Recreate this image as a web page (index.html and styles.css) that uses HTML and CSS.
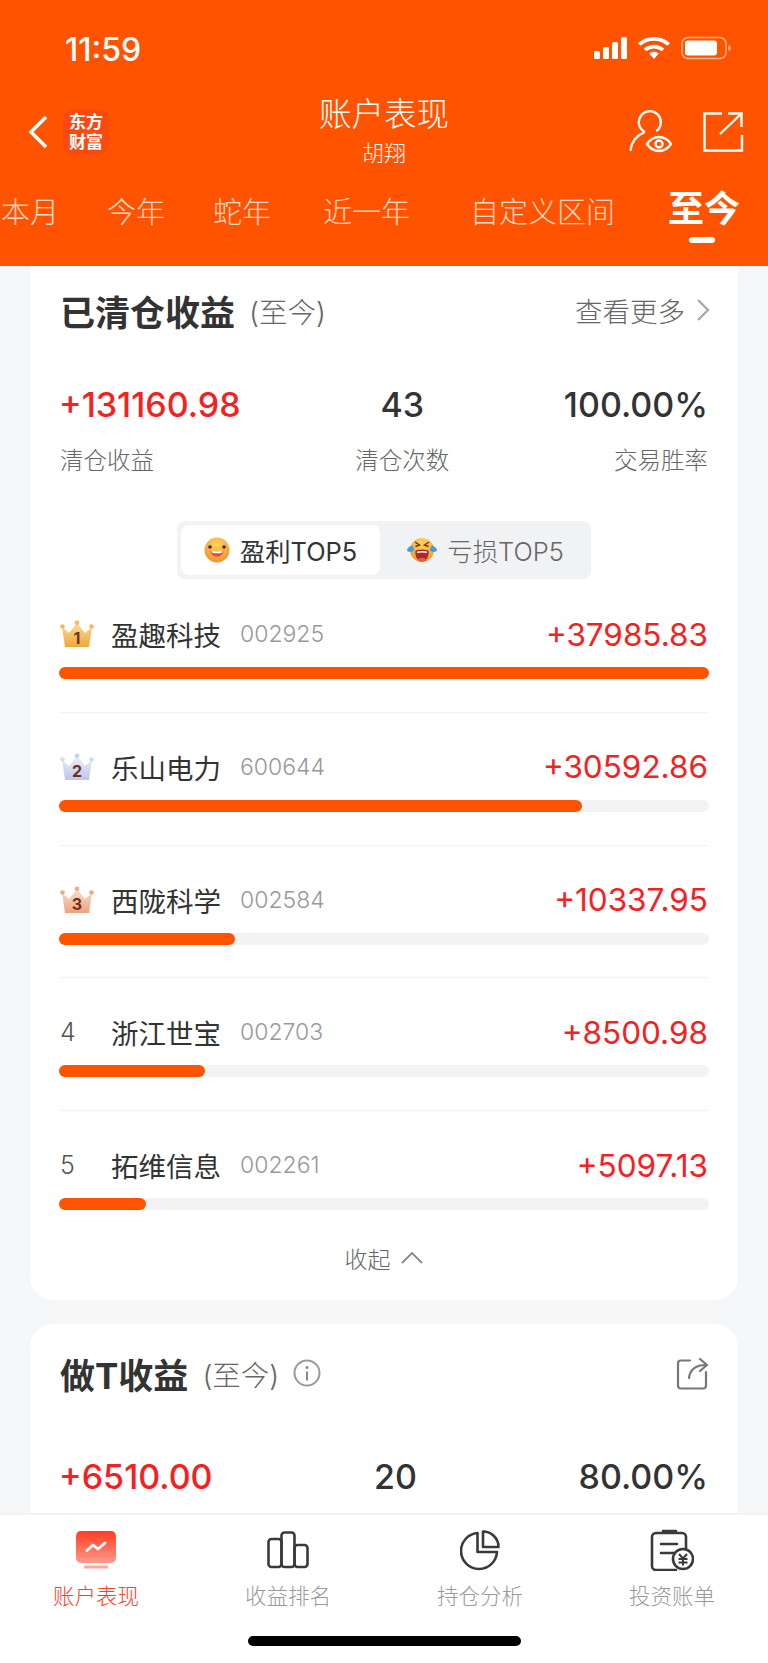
FILE: index.html
```html
<!DOCTYPE html>
<html lang="zh-CN">
<head>
  <meta charset="UTF-8" />
  <title>账户表现</title>
  <link rel="stylesheet" href="styles.css">
</head>
<body>
<div class="page">

  <header class="top">
    <div class="status">
      <span class="time">11:59</span>
      <div class="status-icons">
        <svg width="34" height="24" viewBox="0 0 34 24"><g fill="#fff"><rect x="0" y="15" width="6" height="8" rx="1.5"/><rect x="9" y="11" width="6" height="12" rx="1.5"/><rect x="18" y="6" width="6" height="17" rx="1.5"/><rect x="27" y="1" width="6" height="22" rx="1.5"/></g></svg>
        <svg width="32" height="24" viewBox="0 0 32 24"><g fill="none" stroke="#fff" stroke-width="3.6"><path d="M2 8.500C10 1 22 1 30 8.500"/><path d="M7.500 14C12.500 9.500 19.500 9.500 24.500 14"/></g><path d="M11.500 17.500C14 15.300 18 15.300 20.500 17.500L16 23z" fill="#fff"/></svg>
        <svg width="50" height="24" viewBox="0 0 50 24"><rect x="1" y="1.500" width="44" height="21" rx="6" fill="none" stroke="#ffb48f" stroke-width="1.500"/><rect x="4" y="4.500" width="32" height="15" rx="3" fill="#fff"/><path d="M47.500 9v6c1.500-.5 2.300-1.700 2.300-3s-.8-2.500-2.300-3z" fill="#ffb48f"/></svg>
      </div>
    </div>

    <div class="nav">
      <div class="nav-left">
        <svg width="20" height="34" viewBox="0 0 20 34"><path d="M18 2L3 17l15 15" fill="none" stroke="#fff" stroke-width="3.600"/></svg>
        <div class="logo">东方<br>财富</div>
      </div>
      <div class="nav-title">
        <div class="title">账户表现</div>
        <div class="subtitle">胡翔</div>
      </div>
      <div class="nav-right">
        <svg width="43" height="44" viewBox="0 0 43 44"><g fill="none" stroke="#fff" stroke-width="2.400" stroke-linecap="round"><path d="M15 21.500A11 11 0 1 1 28 20.500"/><path d="M1.500 40C3 30 9 25 15 22.500"/><path d="M18 34c3-4.500 7-7 12-7s9 2.500 12 7c-3 4.500-7 7-12 7s-9-2.500-12-7z"/><circle cx="30" cy="34" r="3.500"/></g></svg>
        <svg width="42" height="42" viewBox="0 0 42 42"><g fill="none" stroke="#fff" stroke-width="2.400"><path d="M20 2.500H2.500v37H40V24"/><path d="M18 23L40 2"/><path d="M26 2.500h13.500V16"/></g></svg>
      </div>
    </div>

    <nav class="tabs">
      <span class="tab">本月</span>
      <span class="tab">今年</span>
      <span class="tab">蛇年</span>
      <span class="tab tab-gap">近一年</span>
      <span class="tab tab-wide">自定义区间</span>
      <span class="tab tab-on">至今</span>
    </nav>
  </header>

  <main class="content">
    <section class="card card-first">
      <div class="card-head">
        <h2>已清仓收益</h2>
        <span class="range">(至今)</span>
        <span class="more">查看更多
          <svg width="16" height="24" viewBox="0 0 16 24"><path d="M3 2l10 10L3 22" fill="none" stroke="#aaa" stroke-width="2.400"/></svg>
        </span>
      </div>

      <div class="stats">
        <div class="stat"><div class="val red">+131160.98</div><div class="lab">清仓收益</div></div>
        <div class="stat mid"><div class="val">43</div><div class="lab">清仓次数</div></div>
        <div class="stat end"><div class="val">100.00%</div><div class="lab">交易胜率</div></div>
      </div>

      <div class="toggle-wrap">
        <div class="toggle">
          <div class="seg seg-on">
            <svg width="26" height="26" viewBox="0 0 26 26"><defs><radialGradient id="sm" cx=".5" cy=".3" r=".75"><stop offset="0" stop-color="#ffd75e"/><stop offset="1" stop-color="#f28a2c"/></radialGradient></defs><circle cx="13" cy="13" r="12.500" fill="url(#sm)"/><circle cx="6" cy="10" r="1.800" fill="#4a2b3a"/><circle cx="20" cy="10" r="1.800" fill="#4a2b3a"/><path d="M6.500 13.500c4 1.300 9 1.300 13 0-.6 4-3.200 6-6.500 6s-5.900-2-6.500-6z" fill="#e4493a"/><path d="M7.500 13.800c3.500.9 7.500.9 11 0l-.5 2c-3 .7-7 .7-10 0z" fill="#fff"/></svg>
            盈利TOP5
          </div>
          <div class="seg seg-off">
            <svg width="30" height="26" viewBox="0 0 30 26"><defs><radialGradient id="cr" cx=".5" cy=".2" r=".8"><stop offset="0" stop-color="#ffd45c"/><stop offset="1" stop-color="#ee9a30"/></radialGradient></defs><circle cx="15" cy="13" r="12" fill="url(#cr)"/><path d="M8 5l4.500 3-4 1.500M22 5l-4.500 3 4 1.500" fill="none" stroke="#6a3a20" stroke-width="1.500"/><path d="M8.500 13.500c4-1.500 9-1.500 13 0 1 5-2 11-6.500 11s-7.500-6-6.500-11z" fill="#a92a26"/><path d="M10 14.500c3-.8 7-.8 10 0v1.500c-3-.7-7-.7-10 0z" fill="#fff"/><path d="M11 23c1-3 7-3 8 0-2 1.800-6 1.800-8 0z" fill="#f0564a"/><path d="M4.500 8.500c1.500 1 2.500 2.500 2.500 4s-1.500 2.500-3.500 2.500S0 14 0 13c0-1.500 2.500-3.500 4.500-4.500zM25.500 8.500c-1.500 1-2.500 2.500-2.500 4s1.500 2.500 3.500 2.500S30 14 30 13c0-1.500-2.500-3.500-4.500-4.500z" fill="#3c9fe4"/></svg>
            亏损TOP5
          </div>
        </div>
      </div>

      <div class="row">
        <div class="row-top">
          <span class="rank">
            <svg width="34" height="28" viewBox="0 0 34 28"><defs><linearGradient id="c1" x1="0" y1="0" x2="0" y2="1"><stop offset="0" stop-color="#fbdc9a"/><stop offset="1" stop-color="#f0a63c"/></linearGradient></defs><path d="M2 7l7 6 8-10 8 10 7-6-3 20H5z" fill="url(#c1)"/><circle cx="2.500" cy="6.500" r="2.300" fill="#f5b85a"/><circle cx="17" cy="2.700" r="2.300" fill="#f5b85a"/><circle cx="31.500" cy="6.500" r="2.300" fill="#f5b85a"/><text x="17" y="24" class="crown-num" fill="#6b3a1c">1</text></svg>
          </span>
          <span class="name">盈趣科技</span><span class="code">002925</span>
          <span class="amount red">+37985.83</span>
        </div>
        <div class="track"><div class="fill" style="width:100%"></div></div>
      </div>

      <div class="row">
        <div class="row-top">
          <span class="rank">
            <svg width="34" height="28" viewBox="0 0 34 28"><defs><linearGradient id="c2" x1="0" y1="0" x2="0" y2="1"><stop offset="0" stop-color="#eceffa"/><stop offset="1" stop-color="#bcc6ea"/></linearGradient></defs><path d="M2 7l7 6 8-10 8 10 7-6-3 20H5z" fill="url(#c2)"/><circle cx="2.500" cy="6.500" r="2.300" fill="#d3daf2"/><circle cx="17" cy="2.700" r="2.300" fill="#c8d0ee"/><circle cx="31.500" cy="6.500" r="2.300" fill="#d3daf2"/><text x="17" y="24" class="crown-num" fill="#6e2f22">2</text></svg>
          </span>
          <span class="name">乐山电力</span><span class="code">600644</span>
          <span class="amount red">+30592.86</span>
        </div>
        <div class="track"><div class="fill" style="width:80.5%"></div></div>
      </div>

      <div class="row">
        <div class="row-top">
          <span class="rank">
            <svg width="34" height="28" viewBox="0 0 34 28"><defs><linearGradient id="c3" x1="0" y1="0" x2="0" y2="1"><stop offset="0" stop-color="#fbe0d0"/><stop offset="1" stop-color="#eda27c"/></linearGradient></defs><path d="M2 7l7 6 8-10 8 10 7-6-3 20H5z" fill="url(#c3)"/><circle cx="2.500" cy="6.500" r="2.300" fill="#f0a885"/><circle cx="17" cy="2.700" r="2.300" fill="#f0a885"/><circle cx="31.500" cy="6.500" r="2.300" fill="#f0a885"/><text x="17" y="24" class="crown-num" fill="#6e2f22">3</text></svg>
          </span>
          <span class="name">西陇科学</span><span class="code">002584</span>
          <span class="amount red">+10337.95</span>
        </div>
        <div class="track"><div class="fill" style="width:27.1%"></div></div>
      </div>

      <div class="row">
        <div class="row-top">
          <span class="rank rank-num">4</span>
          <span class="name">浙江世宝</span><span class="code">002703</span>
          <span class="amount red">+8500.98</span>
        </div>
        <div class="track"><div class="fill" style="width:22.4%"></div></div>
      </div>

      <div class="row row-last">
        <div class="row-top">
          <span class="rank rank-num">5</span>
          <span class="name">拓维信息</span><span class="code">002261</span>
          <span class="amount red">+5097.13</span>
        </div>
        <div class="track"><div class="fill" style="width:13.4%"></div></div>
      </div>

      <div class="collapse">收起
        <svg width="24" height="14" viewBox="0 0 24 14"><path d="M2 12L12 2l10 10" fill="none" stroke="#888" stroke-width="1.800"/></svg>
      </div>
    </section>

    <section class="card card-second">
      <div class="card-head">
        <h2>做T收益</h2>
        <span class="range">(至今)</span>
        <svg class="info" width="28" height="28" viewBox="0 0 28 28"><circle cx="14" cy="14" r="12.500" fill="none" stroke="#999" stroke-width="2"/><circle cx="14" cy="8.500" r="1.500" fill="#888"/><path d="M14 12.500v9" stroke="#888" stroke-width="2"/></svg>
        <svg class="share" width="32" height="33" viewBox="0 0 32 33"><g fill="none" stroke="#777" stroke-width="2.200" stroke-linecap="round" stroke-linejoin="round"><path d="M14 3.500H5a3 3 0 0 0-3 3v22a3 3 0 0 0 3 3h22a3 3 0 0 0 3-3V15"/><path d="M13 21c1-8 6-13 17-13"/><path d="M24 2l7 6-7 6"/></g></svg>
      </div>
      <div class="stats">
        <div class="stat"><div class="val red">+6510.00</div></div>
        <div class="stat mid"><div class="val">20</div></div>
        <div class="stat end"><div class="val">80.00%</div></div>
      </div>
    </section>
  </main>

  <footer class="tabbar">
    <div class="bar-items">
      <div class="bar-item bar-on">
        <svg width="40" height="38" viewBox="0 0 40 38"><defs><linearGradient id="tb" x1="0" y1="0" x2="0" y2="1"><stop offset="0" stop-color="#ff3d22"/><stop offset="1" stop-color="#ff9a8a"/></linearGradient></defs><rect x="0" y="0" width="40" height="32" rx="5" fill="url(#tb)"/><rect x="8" y="34.500" width="24" height="3" rx="1" fill="#ffa899"/><path d="M11 19.500l6-5.500 5 4 7-6" fill="none" stroke="#fff" stroke-width="2.800" stroke-linecap="round" stroke-linejoin="round"/></svg>
        <span>账户表现</span>
      </div>
      <div class="bar-item">
        <svg width="42" height="38" viewBox="0 0 42 38"><g fill="none" stroke="#3a3a3a" stroke-width="2.600"><rect x="1.500" y="8" width="13" height="28" rx="3"/><rect x="14.500" y="1.500" width="13" height="34.500" rx="3"/><rect x="27.500" y="14" width="13" height="22" rx="3"/></g></svg>
        <span>收益排名</span>
      </div>
      <div class="bar-item">
        <svg width="40" height="40" viewBox="0 0 40 40"><g fill="none" stroke="#3a3a3a" stroke-width="2.600" stroke-linejoin="round"><path d="M17.500 3A18 18 0 1 0 37 22H17.500z"/><path d="M23 1.500A15.500 15.500 0 0 1 38.500 17H23z"/></g></svg>
        <span>持仓分析</span>
      </div>
      <div class="bar-item">
        <svg width="44" height="42" viewBox="0 0 44 42"><g fill="none" stroke="#3a3a3a" stroke-width="2.600" stroke-linecap="round"><path d="M36 19V8a4 4 0 0 0-4-4H6a4 4 0 0 0-4 4v29a4 4 0 0 0 4 4h20"/><path d="M13 2h13"/><path d="M11 15h16M11 24h16"/></g><circle cx="33" cy="30" r="10" fill="#fff" stroke="#3a3a3a" stroke-width="2.600"/><path d="M29 25l4 4.500 4-4.500M28.500 30h9M28.500 33.500h9M33 29.500v7" fill="none" stroke="#3a3a3a" stroke-width="2"/></svg>
        <span>投资账单</span>
      </div>
    </div>
    <div class="home-bar"></div>
  </footer>
</div>
</body>
</html>
```

FILE: styles.css
```css
* { box-sizing: border-box; }
html, body { margin: 0; padding: 0; }
body {
  font-family: Inter, "Noto Sans CJK SC", "Noto Sans", sans-serif;
  color: #333;
  background: #f6f7f9;
}
.page {
  width: 768px;
  height: 1663px;
  display: flex;
  flex-direction: column;
  overflow: hidden;
}

/* orange header */
.top {
  height: 266px;
  flex: none;
  background: #ff5300;
  color: #fff;
  position: relative;
  z-index: 1;
}
.status {
  height: 98px;
  padding: 32px 37px 0 65px;
  display: flex;
  justify-content: space-between;
  align-items: flex-start;
}
.time {
  font-size: 32px;
  font-weight: 500;
  line-height: 36px;
}
.status-icons {
  display: flex;
  gap: 11px;
  padding-top: 4px;
}
.status-icons svg:nth-child(2) { margin-left: -1px; transform: scaleX(1.06); }
.nav {
  height: 68px;
  padding: 0 24px 0 28px;
  display: flex;
  justify-content: space-between;
  align-items: center;
  position: relative;
}
.nav-left { display: flex; align-items: center; gap: 15px; }
.logo {
  width: 46px;
  height: 46px;
  border-radius: 12px;
  background: #fa4a10;
  font-size: 17px;
  font-weight: 700;
  line-height: 20px;
  text-align: center;
  padding-top: 3px;
}
.nav-title {
  position: absolute;
  left: 0;
  right: 0;
  top: -5px;
  text-align: center;
}
.title { font-size: 32.5px; line-height: 44px; font-weight: 300; }
.subtitle { font-size: 22px; line-height: 30px; font-weight: 300; margin-top: 1px; }
.nav-right { display: flex; align-items: center; gap: 30px; position: relative; }

.tabs {
  display: flex;
  gap: 48px;
  padding: 25px 0 0 1px;
  white-space: nowrap;
}
.tab {
  font-size: 29px;
  line-height: 44px;
  font-weight: 300;
  color: #ffd9c7;
  position: relative;
}
.tab-gap { margin-left: 4px; }
.tab-wide { margin: 0 5px 0 12px; }
.tab-on {
  font-size: 36px;
  font-weight: 700;
  color: #fff;
  line-height: 40px;
  margin-top: -2px;
}
.tab-on::after {
  content: "";
  position: absolute;
  left: 21px;
  top: 48px;
  width: 26px;
  height: 6px;
  border-radius: 3px;
  background: #fff;
}

/* scrolling part */
.content {
  flex: 1;
  min-height: 0;
  overflow: hidden;
  padding: 0 30px;
}
.card {
  background: #fff;
  border-radius: 24px;
  padding: 0 30px;
}
.card-first {
  margin-top: -20px;
  padding-top: 42px;
  height: 1054px;
}
.card-second {
  margin-top: 24px;
  padding-top: 27px;
  padding-bottom: 80px;
}
.card-head {
  display: flex;
  align-items: center;
  height: 44px;
}
h2 {
  margin: 0;
  font-size: 35px;
  font-weight: 700;
  color: #333;
}
.range {
  font-size: 28.5px;
  font-weight: 300;
  color: #666;
  margin-left: 14px;
}
.more {
  margin-left: auto;
  display: flex;
  align-items: center;
  gap: 10px;
  font-size: 27.5px;
  font-weight: 300;
  color: #666;
  margin-right: -3px;
}
.info { margin-left: 14px; }
.share { margin-left: auto; }

.stats {
  display: flex;
  justify-content: space-between;
  margin-top: 51px;
}
.card-second .stats { margin-top: 60px; }
.stat.mid { text-align: center; min-width: 94px; }
.stat.end { text-align: right; }
.val {
  font-size: 34px;
  font-weight: 500;
  line-height: 44px;
  color: #333;
}
.val.red { color: #f5211f; margin-left: -1px; }
.lab {
  margin-top: 18px;
  font-size: 23.5px;
  font-weight: 300;
  line-height: 32px;
  color: #666;
}
.red { color: #f5211f; }

.toggle-wrap {
  display: flex;
  justify-content: center;
  margin: 44px 0 1px;
}
.toggle {
  width: 414px;
  height: 58px;
  padding: 4px;
  border-radius: 8px;
  background: #f1f2f4;
  display: flex;
}
.seg {
  flex: 1;
  display: flex;
  align-items: center;
  justify-content: center;
  gap: 10px;
  font-size: 25.4px;
  font-weight: 300;
  color: #666;
  border-radius: 8px;
}
.seg-off { padding-left: 4px; }
.seg-on {
  flex: none;
  width: 199px;
  background: #fff;
  color: #333;
  font-weight: 400;
}

.row {
  height: 132.8px;
  padding-top: 38px;
  border-bottom: 1px solid #f1f2f4;
}
.row-last { border-bottom: 0; height: 130.8px; }
.row-top {
  display: flex;
  align-items: center;
  height: 32px;
}
.rank { width: 51px; flex: none; display: flex; }
.rank-num { font-size: 25px; font-weight: 300; color: #555; }
.crown-num {
  font-size: 16px;
  font-weight: 700;
  text-anchor: middle;
}
.name { font-size: 27.5px; font-weight: 400; color: #333; }
.code { font-size: 23px; font-weight: 300; color: #999; margin-left: 19px; }
.amount {
  margin-left: auto;
  font-size: 31.5px;
  font-weight: 400;
}
.track {
  height: 12px;
  margin: 17px -1px 0;
  border-radius: 6px;
  background: #f2f3f5;
}
.fill {
  height: 12px;
  border-radius: 6px;
  background: #ff5300;
}
.collapse {
  display: flex;
  justify-content: center;
  align-items: center;
  gap: 9px;
  height: 32px;
  font-size: 23px;
  font-weight: 300;
  color: #666;
}

/* bottom tabs */
.tabbar {
  height: 150px;
  flex: none;
  background: #fff;
  border-top: 2px solid #f1f2f4;
  position: relative;
}
.bar-items { display: grid; grid-template-columns: repeat(4, 192px); }
.bar-item {
  display: flex;
  flex-direction: column;
  align-items: center;
  padding-top: 14px;
  height: 100px;
  font-size: 21.5px;
  font-weight: 300;
  color: #999;
}
.bar-item svg { height: 42px; }
.bar-item span { margin-top: 9px; line-height: 32px; }
.bar-on { color: #ff3d22; }
.home-bar {
  position: absolute;
  left: 248px;
  top: 121px;
  width: 273px;
  height: 10px;
  border-radius: 5px;
  background: #000;
}
```
